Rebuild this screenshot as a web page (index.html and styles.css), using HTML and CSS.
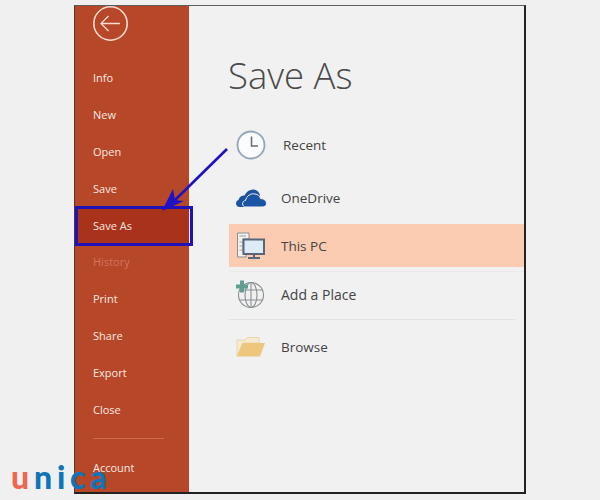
FILE: index.html
```html
<!DOCTYPE html>
<html lang="en">
<head>
<meta charset="utf-8">
<title>Save As</title>
<link rel="stylesheet" href="styles.css">
</head>
<body>
<div class="window">
  <aside class="side">
    <div class="back">
      <svg width="35" height="35" viewBox="0 0 35 35"><circle cx="17.5" cy="17.5" r="16.7" fill="none" stroke="#f7dccf" stroke-width="1.6"/><path d="M8 17.5H27M15.5 10L8 17.5L15.5 25" fill="none" stroke="#f7dccf" stroke-width="1.3"/></svg>
    </div>
    <nav class="nav">
      <div class="nav-item">Info</div>
      <div class="nav-item">New</div>
      <div class="nav-item">Open</div>
      <div class="nav-item">Save</div>
      <div class="nav-item active">Save As<span class="mark"></span></div>
      <div class="nav-item muted">History</div>
      <div class="nav-item">Print</div>
      <div class="nav-item">Share</div>
      <div class="nav-item">Export</div>
      <div class="nav-item">Close</div>
      <div class="nav-sep"></div>
      <div class="nav-item">Account</div>
    </nav>
  </aside>
  <main class="main">
    <h1 class="title">Save As</h1>
    <div class="places">
      <div class="place recent">
        <span class="ico"><svg width="32" height="32" viewBox="0 0 32 32"><circle cx="16" cy="16" r="13.5" fill="#fbfcfd" stroke="#94a7ba" stroke-width="1.8"/><path d="M16.5 7.5V17H23" fill="none" stroke="#6a6a6a" stroke-width="1.5"/></svg></span>
        <span class="label">Recent</span>
      </div>
      <div class="place onedrive">
        <span class="ico"><svg width="32" height="20" viewBox="0 0 32 20"><path d="M5 19C0 19 0 13 3.500 12C4.500 8.500 7 7.500 9.500 7.500C11.500 3 15.500 1 19 1.500C22 2 24 4 25 7L20 19Z" fill="#1b54a3"/><path d="M11 19C6.500 19 6.500 13 10.500 12.500C11.500 8 15.500 5 20 6C23 6.500 25 8 25.500 10.500C29 10.500 31.500 12.500 31.500 15.500C31.500 18 29.500 19 27 19Z" fill="#1b54a3" stroke="#f1f1f1" stroke-width="1"/></svg></span>
        <span class="label">OneDrive</span>
      </div>
      <div class="place thispc">
        <span class="ico"><svg width="30" height="28" viewBox="0 0 30 28"><path d="M1.500 1H13V7H7V21H10V25H1.500Z" fill="#f4f1ed" stroke="#8a8f96"/><path d="M3.500 4H10M3.500 10H6M3.500 14H6M3.500 18H6" stroke="#9a9fa5"/><rect x="7.500" y="7.500" width="20.500" height="14.500" fill="#dcebf6" stroke="#56677a" stroke-width="2"/><path d="M18 22V25M12 26H24" stroke="#56677a" stroke-width="2"/></svg></span>
        <span class="label">This PC</span>
      </div>
      <div class="rule"></div>
      <div class="place addplace">
        <span class="ico"><svg width="32" height="30" viewBox="0 0 32 30"><g fill="none" stroke="#8a8f92" stroke-width="1.100"><circle cx="17" cy="16" r="12.500"/><ellipse cx="17" cy="16" rx="6" ry="12.500"/><path d="M17 3.500V28.500M5 11H29M5 21H29"/></g><path d="M6 1.500H10V5.500H14V9.500H10V13.500H6V9.500H2V5.500H6Z" fill="#5f9e90"/></svg></span>
        <span class="label wide">Add a Place</span>
      </div>
      <div class="rule inset"></div>
      <div class="place browse">
        <span class="ico"><svg width="30" height="22" viewBox="0 0 30 22"><path d="M1 20V4H9L11 1.500H23V7H7Z" fill="#f7ead0" stroke="#e6d6b4"/><path d="M1 20.500L6.500 7H29L24 20.500Z" fill="#eec77f"/></svg></span>
        <span class="label">Browse</span>
      </div>
    </div>
  </main>
</div>
<svg class="arrow" width="80" height="75" viewBox="0 0 80 75"><path d="M66 1L12 54" fill="none" stroke="#1f12c4" stroke-width="2.600"/><path d="M1 63L12 41L14 52L23 53Z" fill="#1f12c4"/></svg>
<div class="logo"><span class="u">u</span>nica</div>
</body>
</html>
```
FILE: styles.css
```css
html, body { margin: 0; padding: 0; }
body {
  width: 600px;
  height: 500px;
  overflow: hidden;
  position: relative;
  background: #f0f0f0;
  font-family: "Open Sans", "Noto Sans", sans-serif;
}
.window {
  box-sizing: border-box;
  width: 452px;
  height: 489px;
  margin: 5px 0 0 74px;
  display: flex;
  background: #f1f1f1;
  border-top: 1px solid #5c5c5c;
  border-left: 1px solid #4a3a34;
  border-right: 2px solid #222;
  border-bottom: 2px solid #222;
}
.side {
  width: 114px;
  flex: none;
  background: #b64728;
  color: #f8e9e2;
}
.back { height: 35px; padding-left: 18px; }
.nav { margin-top: 19.4px; }
.nav-item {
  position: relative;
  height: 36.8px;
  line-height: 36.8px;
  padding-left: 18px;
  font-size: 11px;
  white-space: nowrap;
}
.nav-item.muted { color: #d4745c; }
.nav-item.active { background: #a8321a; }
.mark {
  position: absolute;
  left: 0;
  right: -4px;
  top: -2px;
  bottom: -2px;
  border: 3px solid #1f12b8;
}
.nav-sep {
  height: 1px;
  width: 71px;
  margin: 10px 0 11px 18px;
  background: #cf6a4e;
}
.main {
  flex: 1;
  padding-left: 40px;
  min-width: 0;
  color: #444;
}
.title {
  margin: 0 0 0 -1px;
  height: 112px;
  padding-top: 44px;
  box-sizing: border-box;
  line-height: 50px;
  font-size: 36.5px;
  font-weight: 300;
  color: #4a4a4a;
}
.places { display: flex; flex-direction: column; }
.place {
  display: flex;
  align-items: center;
  font-size: 13.500px;
  color: #444;
}
.label.wide { font-size: 14px; }
.ico { width: 52px; flex: none; display: flex; }
.recent { height: 54px; }
.recent .ico { padding-left: 6px; width: 48px; }
.onedrive { height: 52px; }
.onedrive .ico { padding-left: 6px; width: 46px; }
.thispc { height: 43px; background: #fbcbb2; }
.thispc .ico { padding-left: 7px; width: 45px; }
.addplace { height: 44px; margin-top: -1px; }
.addplace .ico { padding-left: 5px; width: 47px; }
.browse { height: 50px; }
.browse .ico { padding-left: 7px; width: 45px; }
.rule { height: 1px; margin: 4px 0 1px; background: #e9e9e9; }
.rule.inset { margin: 3px 9px 2px 0; background: #e2e2e2; }
.arrow { position: absolute; left: 161px; top: 148px; }
.logo {
  position: absolute;
  left: 11px;
  top: 457px;
  font-family: "Lato", sans-serif;
  font-weight: 900;
  font-size: 32px;
  letter-spacing: 4.800px;
  line-height: 40px;
  color: #0f74b8;
}
.logo .u { color: #e9684f; }
```
